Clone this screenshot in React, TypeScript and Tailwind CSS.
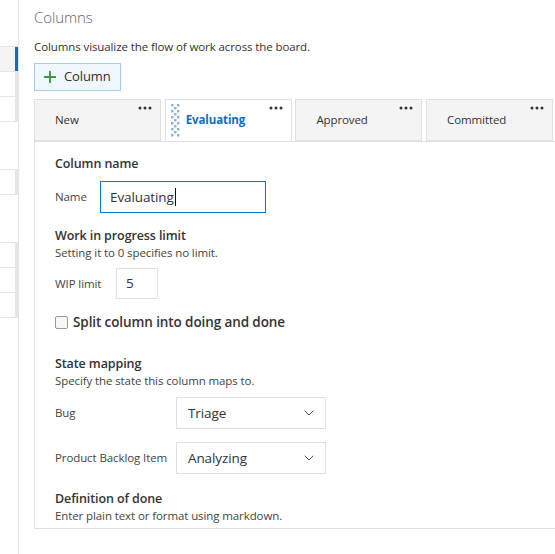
import React from 'react';
import { Plus, ChevronDown } from 'lucide-react';

// Left strip rows: height, selected, has grey scroll tick
const sideRows = [
  { h: 25, selected: true, tick: false },
  { h: 25, selected: false, tick: true },
  { h: 25, selected: false, tick: true },
  { h: 48, selected: false, tick: false },
  { h: 25, selected: false, tick: true },
  { h: 48, selected: false, tick: false },
  { h: 25, selected: false, tick: true },
  { h: 25, selected: false, tick: true },
  { h: 25, selected: false, tick: true },
];

const tabs = [
  { label: 'New', active: false },
  { label: 'Evaluating', active: true },
  { label: 'Approved', active: false },
  { label: 'Committed', active: false },
];

function Ellipsis() {
  return (
    <svg width="14" height="4" viewBox="0 0 14 4" className="absolute right-[8px] top-[6px]">
      <circle cx="2" cy="2" r="1.5" fill="#333" />
      <circle cx="7" cy="2" r="1.5" fill="#333" />
      <circle cx="12" cy="2" r="1.5" fill="#333" />
    </svg>
  );
}

// drag grip: checker of small dots
function Grip() {
  const dots = [];
  for (let r = 0; r < 11; r++) {
    for (let c = 0; c < 3; c++) {
      if ((r + c) % 2 === 0) {
        dots.push(<rect key={`${r}-${c}`} x={c * 3} y={r * 3} width="2.5" height="2.5" fill="#93b4d2" />);
      }
    }
  }
  return (
    <svg width="9" height="33" viewBox="0 0 9 33" className="absolute left-[5px] top-[4px]">
      {dots}
    </svg>
  );
}

export default function App() {
  return (
    <div
      className="flex h-[554px] w-[555px] overflow-hidden bg-white tracking-[-0.1px] text-[#333]"
      style={{ fontFamily: "'Open Sans', 'Noto Sans', sans-serif" }}
    >
      {/* Left nav strip */}
      <div className="w-[19px] shrink-0 border-r border-[#e6e6e6] pt-[46px]">
        <div className="border-t border-[#e6e6e6]">
          {sideRows.map((row, i) => (
            <div
              key={i}
              className={`flex justify-end border-b border-[#e6e6e6] ${row.selected ? 'bg-[#f4f4f4]' : ''}`}
              style={{ height: row.h }}
            >
              {row.selected && <div className="w-[3px] bg-[#0f6cbd]" />}
              {row.tick && <div className="w-[3px] bg-[#e6e6e6]" />}
            </div>
          ))}
        </div>
      </div>

      {/* Main */}
      <div className="flex min-w-0 flex-1 flex-col pl-[15px]">
        <h1 className="mt-[5px] text-[15px] font-light leading-[24px] text-[#666]">Columns</h1>
        <p className="mt-[10px] text-[11.5px] leading-[16px]">Columns visualize the flow of work across the board.</p>

        <div className="mt-[8px]">
          <button className="flex h-[28px] items-center gap-[5px] border border-[#a6ccf1] bg-[#eff6fc] pl-[6px] pr-[9px] text-[13px] text-[#333]">
            <Plus size={18} strokeWidth={2.5} className="text-[#339947]" />
            Column
          </button>
        </div>

        {/* Tabs */}
        <div className="mt-[8px] flex gap-[3.7px]">
          {tabs.map((t) => (
            <div
              key={t.label}
              className={`relative h-[42px] w-[127px] shrink-0 border border-[#e0e0e0] ${
                t.active ? 'z-10 -mb-px border-b-white bg-white' : 'bg-[#f4f4f4]'
              }`}
            >
              {t.active && <Grip />}
              <Ellipsis />
              <span
                className={`absolute left-[20px] top-[12px] text-[11.5px] leading-[16px] ${
                  t.active ? 'font-bold text-[#106ebe]' : 'text-[#333]'
                }`}
              >
                {t.label}
              </span>
            </div>
          ))}
        </div>

        {/* Panel */}
        <div className="-mr-[10px] h-[388px] border-b border-l border-t border-[#e0e0e0] pl-[20px] pt-[13px]">
          <h2 className="text-[12.5px] font-semibold leading-[18px]">Column name</h2>
          <div className="mt-[8px] flex items-center">
            <span className="w-[45px] text-[11.5px] text-[#444]">Name</span>
            <div className="flex h-[32px] w-[166px] items-center border border-[#0078d4] px-[9px] text-[13.5px]">
              Evaluating<span className="ml-px h-[18px] w-px bg-[#111]" />
            </div>
          </div>

          <h2 className="mt-[14px] text-[12.5px] font-semibold leading-[18px]">Work in progress limit</h2>
          <p className="text-[11.5px] leading-[16px] text-[#444]">Setting it to 0 specifies no limit.</p>
          <div className="mt-[7px] flex items-center">
            <span className="w-[61px] text-[11.5px] text-[#444]">WIP limit</span>
            <div className="flex h-[31px] w-[42px] items-center border border-[#e0e0e0] px-[9px] text-[13.5px]">5</div>
          </div>

          <label className="mt-[14px] flex items-center gap-[5px]">
            <span className="h-[13px] w-[13px] rounded-[2px] border border-[#999] bg-[#f7f7f7]" />
            <span className="text-[13.5px] font-semibold leading-[18px]">Split column into doing and done</span>
          </label>

          <h2 className="mt-[24px] text-[12.5px] font-semibold leading-[18px]">State mapping</h2>
          <p className="text-[11.5px] leading-[16px] text-[#444]">Specify the state this column maps to.</p>

          <div className="mt-[8px] flex items-center">
            <span className="w-[121px] text-[11.5px] text-[#444]">Bug</span>
            <div className="flex h-[32px] w-[150px] items-center justify-between border border-[#e0e0e0] pl-[11px] pr-[8px] text-[13.5px]">
              Triage
              <ChevronDown size={16} strokeWidth={1.25} className="text-[#333]" />
            </div>
          </div>
          <div className="mt-[13px] flex items-center">
            <span className="w-[121px] text-[11.5px] text-[#444]">Product Backlog Item</span>
            <div className="flex h-[32px] w-[150px] items-center justify-between border border-[#e0e0e0] pl-[11px] pr-[8px] text-[13.5px]">
              Analyzing
              <ChevronDown size={16} strokeWidth={1.25} className="text-[#333]" />
            </div>
          </div>

          <h2 className="mt-[16px] text-[12.5px] font-semibold leading-[18px]">Definition of done</h2>
          <p className="text-[11.5px] leading-[16px] text-[#444]">Enter plain text or format using markdown.</p>
        </div>
      </div>
    </div>
  );
}
